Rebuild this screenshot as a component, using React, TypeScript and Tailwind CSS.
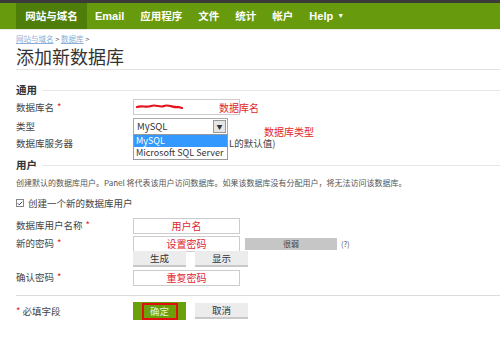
import { Check } from "lucide-react";

const font = "font-['Microsoft_YaHei','Noto_Sans_CJK_SC',sans-serif]";

const Label = ({ text, req }: { text: string; req?: boolean }) => (
  <div className="w-[117px] shrink-0 text-[9.5px] text-[#444]">
    {text}
    {req && <span className="ml-[3px] text-[#d22]">*</span>}
  </div>
);

const Input = ({ note }: { note?: string }) => (
  <div className="w-[107px] h-[16px] border border-[#ccc] bg-white flex items-center justify-center text-[10px] text-[#e0262b] leading-none">
    {note}
  </div>
);

const Btn = ({ text }: { text: string }) => (
  <div className="w-[53px] h-[16px] bg-[#ececec] border-b-2 border-[#c8c8c8] flex items-center justify-center text-[9.5px] text-[#333]">
    {text}
  </div>
);

const Section = ({ title }: { title: string }) => (
  <div className="flex items-center gap-[6px] h-[12px]">
    <span className="text-[10.5px] font-bold text-[#333]">{title}</span>
    <div className="flex-1 h-px bg-[#e6e6e6]" />
  </div>
);

export default function App() {
  return (
    <div className={`w-[500px] h-[364px] bg-white overflow-hidden ${font}`}>
      <div className="h-[3px] bg-[#3a3a3a]" />
      <nav className="h-[26px] bg-[#679a0c] flex items-stretch pl-[16px] text-white font-bold text-[10.5px]">
        <div className="bg-[#4f7d0a] w-[71px] flex items-center justify-center">网站与域名</div>
        <div className="flex items-center px-[8px] font-['Liberation_Sans',sans-serif] text-[11px]">Email</div>
        <div className="flex items-center px-[8px]">应用程序</div>
        <div className="flex items-center px-[8px]">文件</div>
        <div className="flex items-center px-[8px]">统计</div>
        <div className="flex items-center px-[8px]">帐户</div>
        <div className="flex items-center px-[8px] font-['Liberation_Sans',sans-serif] text-[11px]">
          Help <span className="ml-[4px] text-[7px]">▼</span>
        </div>
      </nav>
      <div className="h-px bg-[#e8e8e8]" />

      <div className="pl-[16px]">
        <div className="mt-[4px] h-[10px] text-[7.5px] text-[#8aaed6] leading-[10px]">
          <span className="underline">网站与域名</span>
          <span className="text-[#666]"> &gt; </span>
          <span className="underline">数据库</span>
          <span className="text-[#666]"> &gt;</span>
        </div>
        <h1 className="mt-[1px] h-[22px] text-[18px] leading-[22px] text-[#333]">添加新数据库</h1>
        <div className="mt-[2px] h-px bg-[#e2e2e2]" />

        <div className="mt-[14px]">
          <Section title="通用" />
        </div>

        <div className="mt-[2px] flex items-center h-[18px]">
          <Label text="数据库名" req />
          <div className="relative w-[107px] h-[16px] border border-[#ccc] bg-white">
            <svg className="absolute left-[2px] top-[3px]" width="50" height="8" viewBox="0 0 50 8">
              <path d="M1 4 C6 2 10 5 15 3 S24 5 28 3 S38 5 42 4 L46 5" stroke="#e3141b" strokeWidth="2.2" fill="none" strokeLinecap="round" />
            </svg>
          </div>
          <span className="relative ml-[-21px] text-[10px] text-[#e0262b]">数据库名</span>
        </div>

        <div className="relative mt-[1px] flex items-center h-[18px]">
          <Label text="类型" />
          <div className="w-[95px] h-[17px] border border-[#aaa] bg-white flex items-center justify-between pl-[3px] pr-[1px] text-[9.5px] text-[#333]">
            <span>MySQL</span>
            <div className="w-[13px] h-[13px] bg-[#e6e6e6] border border-[#999] flex items-center justify-center text-[6px]">▼</div>
          </div>
          <span className="absolute left-[248px] top-[7px] text-[10px] text-[#e0262b]">数据库类型</span>
          <div className="absolute left-[117px] top-[17px] w-[95px] border border-[#999] bg-white text-[9px] whitespace-nowrap z-10">
            <div className="h-[12px] bg-[#3399ff] text-white pl-[2px] leading-[12px]">MySQL</div>
            <div className="h-[12px] pl-[2px] leading-[12px] text-[#333]">Microsoft SQL Server</div>
          </div>
        </div>

        <div className="flex items-center h-[16px]">
          <Label text="数据库服务器" />
          <span className="ml-[96px] text-[9.5px] text-[#444]">L的默认值)</span>
        </div>

        <div className="mt-[8px]">
          <Section title="用户" />
        </div>
        <p className="mt-[6px] text-[8px] text-[#555] leading-[12px] whitespace-nowrap">
          创建默认的数据库用户。Panel 将代表该用户访问数据库。如果该数据库没有分配用户，将无法访问该数据库。
        </p>

        <div className="mt-[8px] flex items-center h-[12px] text-[9.5px] text-[#444]">
          <div className="w-[8px] h-[8px] border border-[#888] bg-white flex items-center justify-center mr-[4px]">
            <Check size={7} strokeWidth={4} className="text-[#335]" />
          </div>
          创建一个新的数据库用户
        </div>

        <div className="mt-[8px] flex items-center h-[17px]">
          <Label text="数据库用户名称" req />
          <Input note="用户名" />
        </div>

        <div className="mt-[1px] flex items-center h-[17px]">
          <Label text="新的密码" req />
          <Input note="设置密码" />
          <div className="ml-[5px] w-[92px] h-[12px] bg-[#c6c6c6] flex items-center justify-center text-[8px] text-[#444]">很弱</div>
          <span className="ml-[4px] text-[7.5px] text-[#555]">(?)</span>
        </div>

        <div className="mt-[-1px] flex gap-[9px] pl-[117px]">
          <Btn text="生成" />
          <Btn text="显示" />
        </div>

        <div className="mt-[2px] flex items-center h-[17px]">
          <Label text="确认密码" req />
          <Input note="重复密码" />
        </div>

        <div className="mt-[9px] h-px bg-[#dcdcdc]" />

        <div className="mt-[6px] flex items-center h-[18px]">
          <div className="w-[117px] text-[9.5px] text-[#444]">
            <span className="text-[#d22] mr-[2px]">*</span>必填字段
          </div>
          <div className="w-[53px] h-[18px] bg-[#6aa10a] flex items-center justify-center">
            <div className="w-[36px] h-[17px] border-2 border-[#e01010] flex items-center justify-center text-[9.5px] text-[#e8f3d0]">
              确定
            </div>
          </div>
          <div className="ml-[9px]">
            <Btn text="取消" />
          </div>
        </div>
      </div>
    </div>
  );
}
